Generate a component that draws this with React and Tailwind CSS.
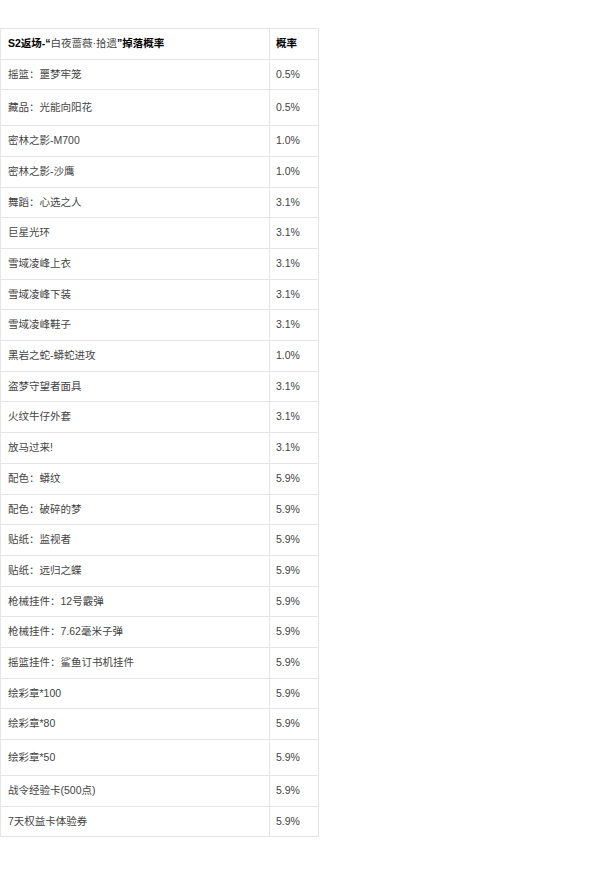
import React from "react";

const rows = [
  ["摇篮：噩梦牢笼", "0.5%"],
  ["藏品：光能向阳花", "0.5%", true],
  ["密林之影-M700", "1.0%"],
  ["密林之影-沙鹰", "1.0%"],
  ["舞蹈：心选之人", "3.1%"],
  ["巨星光环", "3.1%"],
  ["雪域凌峰上衣", "3.1%"],
  ["雪域凌峰下装", "3.1%"],
  ["雪域凌峰鞋子", "3.1%"],
  ["黑岩之蛇-蟒蛇进攻", "1.0%"],
  ["盗梦守望者面具", "3.1%"],
  ["火纹牛仔外套", "3.1%"],
  ["放马过来!", "3.1%"],
  ["配色：蟒纹", "5.9%"],
  ["配色：破碎的梦", "5.9%"],
  ["贴纸：监视者", "5.9%"],
  ["贴纸：远归之蝶", "5.9%"],
  ["枪械挂件：12号霰弹", "5.9%"],
  ["枪械挂件：7.62毫米子弹", "5.9%"],
  ["摇篮挂件：鲨鱼订书机挂件", "5.9%"],
  ["绘彩章*100", "5.9%"],
  ["绘彩章*80", "5.9%"],
  ["绘彩章*50", "5.9%", true],
  ["战令经验卡(500点)", "5.9%"],
  ["7天权益卡体验券", "5.9%"],
];

export default function App() {
  return (
    <div
      className="w-[600px] h-[870px] bg-white pt-[28px]"
      style={{ fontFamily: '"Liberation Sans", "Noto Sans CJK SC", sans-serif' }}
    >
      <table className="w-[319px] border-collapse text-[10.5px] leading-[13.7px] text-[#444]">
        <thead>
          <tr>
            <th className="border border-[#e6e6e6] text-left font-normal pl-[7px] pr-[6px] py-[8px] w-[269px]">
              <span className="font-bold text-black">S2返场-“</span>
              <span className="text-[#444]">白夜蔷薇·拾遗</span>
              <span className="font-bold text-black">”掉落概率</span>
            </th>
            <th className="border border-[#e6e6e6] text-left font-bold text-black pl-[6px] py-[8px]">
              概率
            </th>
          </tr>
        </thead>
        <tbody>
          {rows.map(([name, p, tall], i) => (
            <tr key={i}>
              <td
                className={
                  tall
                    ? "border border-[#e6e6e6] pl-[7px] py-[10.5px]"
                    : "border border-[#e6e6e6] pl-[7px] py-[8px]"
                }
              >
                {name}
              </td>
              <td
                className={
                  tall
                    ? "border border-[#e6e6e6] pl-[6px] py-[10.5px]"
                    : "border border-[#e6e6e6] pl-[6px] py-[8px]"
                }
              >
                {p}
              </td>
            </tr>
          ))}
        </tbody>
      </table>
    </div>
  );
}
